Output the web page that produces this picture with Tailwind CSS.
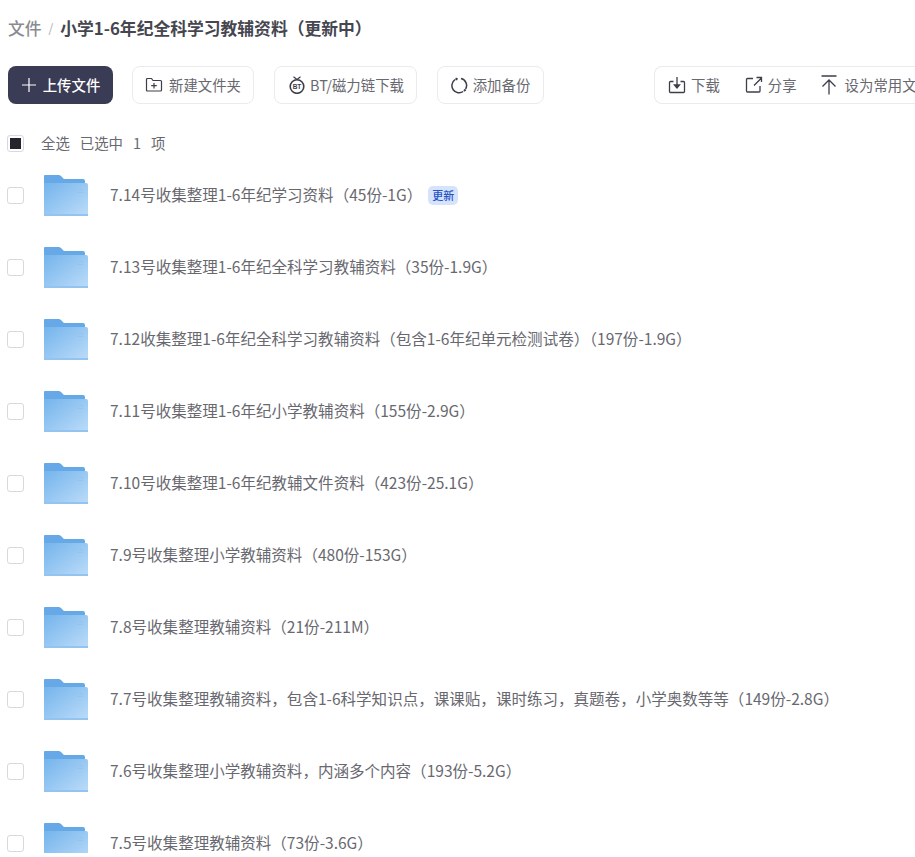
<!DOCTYPE html>
<html lang="zh"><head><meta charset="utf-8"><script src="https://cdn.jsdelivr.net/npm/@tailwindcss/browser@4"></script></head>
<body class="bg-white overflow-hidden">
<svg width="0" height="0" class="absolute"><defs>
<linearGradient id="fg" x1="0" y1="0" x2="1" y2="1"><stop offset="0" stop-color="#74b4ec"/><stop offset="1" stop-color="#bcdcf9"/></linearGradient>
<symbol id="folder" viewBox="0 0 44 41"><path d="M1 0H14.500Q16 0 17 1L20 4H39Q41 4 41 6V12H0V1Q0 0 1 0Z" fill="#66a9e6"/><path d="M0 8H42Q44 8 44 10V39Q44 41 42 41H2Q0 41 0 39Z" fill="url(#fg)"/><rect x="0" y="39" width="44" height="2" fill="#93c4f0"/><path d="M33 15H39M33 17.500H39" stroke="#93c3ee" stroke-width="1.200"/></symbol>
</defs></svg>
<div class="w-[915px] h-[853px] overflow-hidden font-['Noto_Sans_CJK_SC',sans-serif] text-[15.540px] text-[#68686f]">
<div class="h-[56px] pl-2 flex items-center text-[16.800px] leading-[24px]"><span class="text-[#8a8b92] font-medium">文件</span><span class="mx-[7px] text-[#a8a9ae] text-[12px]">/</span><span class="font-bold text-[#45464f]">小学1-6年纪全科学习教辅资料（更新中）</span></div>

<div class="h-[38px] mt-[10px] pl-2 flex items-stretch whitespace-nowrap text-[14.400px]">
<button class="w-[105px] shrink-0 rounded-[8px] bg-[#3a3b54] text-white font-medium flex items-center justify-center gap-[6px]"><svg width="16" height="16" viewBox="0 0 16 16" fill="none" stroke="#fff" stroke-width="1.200"><path d="M8 1V15M1 8H15"/></svg>上传文件</button>
<button class="w-[122px] shrink-0 ml-[19px] rounded-[8px] border border-[#ebebee] flex items-center justify-center gap-[6px]"><svg width="18" height="16" viewBox="0 0 18 16" fill="none" stroke="#3d3e4a" stroke-width="1.200"><path d="M1.500 2.500Q1.500 1.500 2.500 1.500H6.500L8 3.500H15.500Q16.500 3.500 16.500 4.500V13Q16.500 14 15.500 14H2.500Q1.500 14 1.500 13ZM9 6V11.500M6.200 8.700H11.800"/></svg>新建文件夹</button>
<button class="w-[143px] shrink-0 ml-[20px] rounded-[8px] border border-[#ebebee] flex items-center justify-center gap-[3px]"><svg width="20" height="18" viewBox="0 0 20 18" fill="none" stroke="#3d3e4a" stroke-width="1.200"><circle cx="10" cy="10.500" r="6.800" stroke-width="1.600"/><path d="M6.500 0.800L10 3.500L13.500 0.800"/><text x="10" y="12.800" text-anchor="middle" font-size="6.500" font-weight="700" fill="#3d3e4a" stroke="none" font-family="Liberation Sans">BT</text></svg>BT/磁力链下载</button>
<button class="w-[107px] shrink-0 ml-[20px] rounded-[8px] border border-[#ebebee] flex items-center justify-center gap-[5px]"><svg width="17" height="17" viewBox="0 0 17 17" fill="none" stroke="#3d3e4a" stroke-width="1.500"><path d="M10 1.600A7 7 0 0 1 14.600 12M12.200 14.500A7 7 0 0 1 4 2.700"/><path d="M4.500 1.500L6.500 2.500M14.600 12.500L13 14" stroke-width="2"/></svg>添加备份</button>
<div class="w-[300px] ml-[110px] rounded-l-[8px] border border-r-0 border-[#ebebee] flex items-center pl-[13px] shrink-0 overflow-hidden">
<svg class="shrink-0" width="18" height="18" viewBox="0 0 18 18" fill="none" stroke="#3d3e4a" stroke-width="1.300"><path d="M5.500 5.500H2.500Q1.500 5.500 1.500 6.500V15.500Q1.500 16.500 2.500 16.500H15.500Q16.500 16.500 16.500 15.500V6.500Q16.500 5.500 15.500 5.500H12.500M9 1V11"/><path d="M6.500 9L9 12L11.500 9Z" fill="#3d3e4a"/></svg><span class="ml-[5px]">下载</span>
<svg class="ml-[25px] shrink-0" width="18" height="18" viewBox="0 0 18 18" fill="none" stroke="#3d3e4a" stroke-width="1.300"><path d="M8 2.500H2.500Q1.500 2.500 1.500 3.500V15Q1.500 16 2.500 16H14Q15 16 15 15V10M9 9.500L16 2.500M11.500 1.500H16.500V6"/></svg><span class="ml-[5px]">分享</span>
<svg class="ml-[24px] shrink-0" width="16" height="20" viewBox="0 0 16 20" fill="none" stroke="#3d3e4a" stroke-width="1.300"><path d="M0.500 1H15.500M8 5V19.500M1.500 11.500L8 5L14.500 11.500"/></svg><span class="ml-[8px]">设为常用文件夹</span>
</div></div>

<div class="h-[24px] mt-[27px] pl-[7px] flex items-center text-[14.400px]"><span class="w-[17px] h-[17px] rounded-[3px] border border-[#d9d9dd] flex items-center justify-center"><span class="w-[11px] h-[11px] bg-[#24242e]"></span></span><span class="ml-[17px]">全选</span><span class="ml-[10px]">已选中</span><span class="ml-[10px]">1</span><span class="ml-[10px]">项</span></div>

<ul class="mt-[4px]">
<li class="h-[72px] flex items-center pl-[7px]"><span class="w-[17px] h-[17px] shrink-0 rounded-[3px] border border-[#d9d9dd]"></span><svg class="ml-[20px] shrink-0 mt-[1px]" width="44" height="41"><use href="#folder"/></svg><span class="ml-[22px]">7.14号收集整理1-6年纪学习资料（45份-1G）</span><span class="ml-[6px] h-[19px] px-[4px] rounded-[5px] bg-[#d6e3fb] text-[#2456c8] text-[11px] font-medium flex items-center">更新</span></li>
<li class="h-[72px] flex items-center pl-[7px]"><span class="w-[17px] h-[17px] shrink-0 rounded-[3px] border border-[#d9d9dd]"></span><svg class="ml-[20px] shrink-0 mt-[1px]" width="44" height="41"><use href="#folder"/></svg><span class="ml-[22px]">7.13号收集整理1-6年纪全科学习教辅资料（35份-1.9G）</span></li>
<li class="h-[72px] flex items-center pl-[7px]"><span class="w-[17px] h-[17px] shrink-0 rounded-[3px] border border-[#d9d9dd]"></span><svg class="ml-[20px] shrink-0 mt-[1px]" width="44" height="41"><use href="#folder"/></svg><span class="ml-[22px]">7.12收集整理1-6年纪全科学习教辅资料（包含1-6年纪单元检测试卷）（197份-1.9G）</span></li>
<li class="h-[72px] flex items-center pl-[7px]"><span class="w-[17px] h-[17px] shrink-0 rounded-[3px] border border-[#d9d9dd]"></span><svg class="ml-[20px] shrink-0 mt-[1px]" width="44" height="41"><use href="#folder"/></svg><span class="ml-[22px]">7.11号收集整理1-6年纪小学教辅资料（155份-2.9G）</span></li>
<li class="h-[72px] flex items-center pl-[7px]"><span class="w-[17px] h-[17px] shrink-0 rounded-[3px] border border-[#d9d9dd]"></span><svg class="ml-[20px] shrink-0 mt-[1px]" width="44" height="41"><use href="#folder"/></svg><span class="ml-[22px]">7.10号收集整理1-6年纪教辅文件资料（423份-25.1G）</span></li>
<li class="h-[72px] flex items-center pl-[7px]"><span class="w-[17px] h-[17px] shrink-0 rounded-[3px] border border-[#d9d9dd]"></span><svg class="ml-[20px] shrink-0 mt-[1px]" width="44" height="41"><use href="#folder"/></svg><span class="ml-[22px]">7.9号收集整理小学教辅资料（480份-153G）</span></li>
<li class="h-[72px] flex items-center pl-[7px]"><span class="w-[17px] h-[17px] shrink-0 rounded-[3px] border border-[#d9d9dd]"></span><svg class="ml-[20px] shrink-0 mt-[1px]" width="44" height="41"><use href="#folder"/></svg><span class="ml-[22px]">7.8号收集整理教辅资料（21份-211M）</span></li>
<li class="h-[72px] flex items-center pl-[7px]"><span class="w-[17px] h-[17px] shrink-0 rounded-[3px] border border-[#d9d9dd]"></span><svg class="ml-[20px] shrink-0 mt-[1px]" width="44" height="41"><use href="#folder"/></svg><span class="ml-[22px]">7.7号收集整理教辅资料，包含1-6科学知识点，课课贴，课时练习，真题卷，小学奥数等等（149份-2.8G）</span></li>
<li class="h-[72px] flex items-center pl-[7px]"><span class="w-[17px] h-[17px] shrink-0 rounded-[3px] border border-[#d9d9dd]"></span><svg class="ml-[20px] shrink-0 mt-[1px]" width="44" height="41"><use href="#folder"/></svg><span class="ml-[22px]">7.6号收集整理小学教辅资料，内涵多个内容（193份-5.2G）</span></li>
<li class="h-[72px] flex items-center pl-[7px]"><span class="w-[17px] h-[17px] shrink-0 rounded-[3px] border border-[#d9d9dd]"></span><svg class="ml-[20px] shrink-0 mt-[1px]" width="44" height="41"><use href="#folder"/></svg><span class="ml-[22px]">7.5号收集整理教辅资料（73份-3.6G）</span></li>
</ul>
</div>
</body></html>
